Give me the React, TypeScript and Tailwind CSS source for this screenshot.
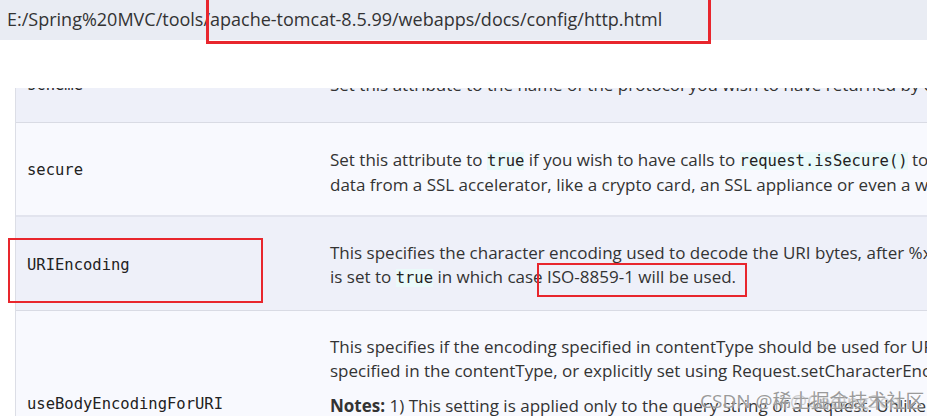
import React from "react";

const SANS = "font-['Open_Sans','Noto_Sans_CJK_SC',sans-serif]";
const MONO = "font-['DejaVu_Sans_Mono',monospace]";

function Code({ children }: { children: React.ReactNode }) {
  return (
    <code className={`${MONO} bg-[#eafafa] text-[15.5px] text-[#222]`}>
      {children}
    </code>
  );
}

export default function App() {
  return (
    <div className={`relative h-[416px] w-[943px] overflow-hidden bg-white ${SANS}`}>
      {/* address bar */}
      <div className="flex h-[40px] w-[927px] items-center bg-[#e9ecf3] pb-[2px] pl-[7px] text-[18px] text-[#333]">
        E:/Spring%20MVC/tools/apache-tomcat-8.5.99/webapps/docs/config/http.html
      </div>

      <div className="h-[48px]" />

      {/* attributes table */}
      <div className="ml-[15px] w-[912px] overflow-hidden border-l border-[#dcdee6] text-[17px] leading-[24px] text-[#333]">
        {/* scheme (clipped by the band above) */}
        <div className="flex h-[35px] overflow-hidden border-b border-[#d9dbe4] bg-[#eef0f9]">
          <div className={`-mt-[15px] w-[314px] shrink-0 pl-[11px] ${MONO} text-[15.5px] text-[#222]`}>
            scheme
          </div>
          <div className="-mt-[15px] whitespace-nowrap">
            Set this attribute to the name of the protocol you wish to have returned by calls to
          </div>
        </div>

        {/* secure */}
        <div className="flex h-[94px] border-b-2 border-[#e2e4ee] bg-[#f8f9fe]">
          <div className={`w-[314px] shrink-0 pl-[11px] pt-[35px] ${MONO} text-[15.5px] text-[#222]`}>
            secure
          </div>
          <div className="whitespace-nowrap pt-[25px]">
            <div>
              Set this attribute to <Code>true</Code> if you wish to have calls to{" "}
              <Code>request.isSecure()</Code> to return <Code>true</Code> for requests
            </div>
            <div>data from a SSL accelerator, like a crypto card, an SSL appliance or even a web server.</div>
          </div>
        </div>

        {/* URIEncoding */}
        <div className="flex h-[94px] border-b border-[#d9dbe4] bg-[#eef0f9]">
          <div className={`w-[314px] shrink-0 pl-[11px] pt-[36px] ${MONO} text-[15.5px] text-[#222]`}>
            URIEncoding
          </div>
          <div className="whitespace-nowrap pt-[24px]">
            <div>This specifies the character encoding used to decode the URI bytes, after %xx decoding the URL.</div>
            <div>
              is set to <Code>true</Code> in which case ISO-8859-1 will be used.
            </div>
          </div>
        </div>

        {/* useBodyEncodingForURI */}
        <div className="flex h-[120px] bg-[#f8f9fe]">
          <div className={`w-[314px] shrink-0 pl-[11px] pt-[81px] ${MONO} text-[15.5px] text-[#222]`}>
            useBodyEncodingForURI
          </div>
          <div className="whitespace-nowrap pt-[24px]">
            <div>This specifies if the encoding specified in contentType should be used for URI query parameters,</div>
            <div>specified in the contentType, or explicitly set using Request.setCharacterEncoding method.</div>
            <div className="mt-[11px]">
              <b>Notes:</b> 1) This setting is applied only to the query string of a request. Unlike
            </div>
          </div>
        </div>
      </div>

      {/* red annotation boxes */}
      <div className="absolute left-[206px] top-[-4px] h-[48px] w-[505px] border-[3px] border-[#e8262d]" />
      <div className="absolute left-[8px] top-[238px] h-[65px] w-[255px] border-[2px] border-[#e8262d]" />
      <div className="absolute left-[537px] top-[263px] h-[34px] w-[210px] border-[2px] border-[#e8262d]" />

      {/* watermark */}
      <div className="absolute left-[700px] top-[387px] whitespace-nowrap text-[19px] text-[#9a9a9a] [text-shadow:0_0_2px_#fff]">
        CSDN @稀土掘金技术社区
      </div>
      <div className="absolute left-[790px] top-[387px] whitespace-nowrap text-[19px] text-[#b0b0b0] opacity-60">
        @CodingSea
      </div>
    </div>
  );
}
